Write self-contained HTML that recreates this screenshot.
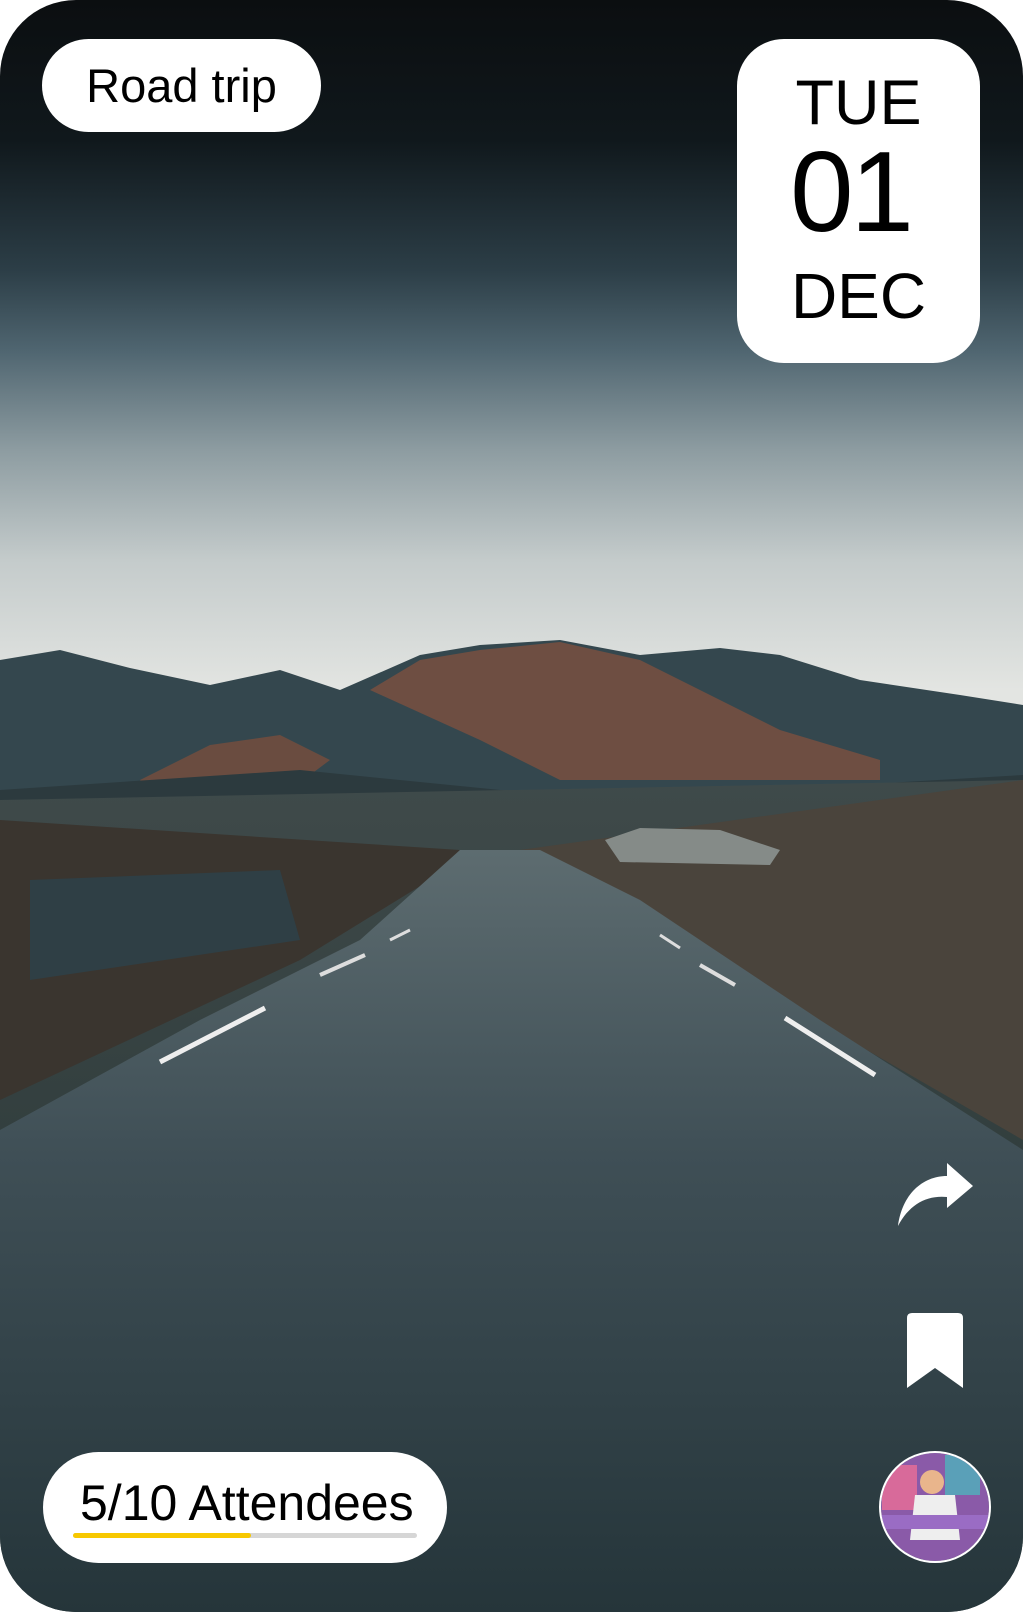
<!DOCTYPE html>
<html><head><style>
html,body{margin:0;padding:0;background:#fff;}
body{width:1023px;height:1614px;position:relative;overflow:hidden;font-family:"Liberation Sans",sans-serif;}
.card{position:absolute;left:0;top:0;width:1023px;height:1612px;border-radius:76px;overflow:hidden;
background:linear-gradient(180deg,#0b0e10 0px,#10181c 140px,#2c3e47 270px,#4f6570 350px,#8d9ca1 450px,#c4cbcb 560px,#e3e5e2 690px);}
.pill{position:absolute;background:#fff;color:#000;}
</style></head><body>
<div class="card">
<svg width="1023" height="1612" style="position:absolute;left:0;top:0">
<defs>
<linearGradient id="g" x1="0" y1="0" x2="0" y2="1"><stop offset="0" stop-color="#3f4a4a"/><stop offset="1" stop-color="#22302f"/></linearGradient>
<linearGradient id="rd" x1="0" y1="0" x2="0" y2="1"><stop offset="0" stop-color="#5d6c70"/><stop offset="0.4" stop-color="#3f4f56"/><stop offset="1" stop-color="#25353a"/></linearGradient>
</defs>
<path d="M0 660 L60 650 L130 668 L210 685 L280 670 L340 690 L420 655 L480 645 L560 640 L640 655 L720 648 L780 655 L860 680 L960 695 L1023 705 L1023 800 L0 820Z" fill="#34474e"/>
<path d="M370 690 L420 660 L480 650 L560 642 L640 660 L700 690 L780 730 L880 760 L880 780 L560 780 L480 740Z" fill="#6e4e42"/>
<path d="M140 780 L210 745 L280 735 L330 760 L290 790 L150 790Z" fill="#6a4c40"/>
<path d="M0 790 L300 770 L600 800 L1023 775 L1023 830 L0 840Z" fill="#2c3a3e"/>
<path d="M0 800 L1023 780 L1023 1612 L0 1612Z" fill="url(#g)"/>
<path d="M0 820 L460 850 L430 880 L300 960 L0 1100Z" fill="#3a352f"/>
<path d="M520 850 L1023 780 L1023 1140 L780 1000 L620 900Z" fill="#4a443c"/>
<path d="M30 880 L280 870 L300 940 L30 980Z" fill="#2f3f45"/>
<path d="M605 840 L640 828 L720 830 L780 850 L770 865 L620 862Z" fill="#858b88"/>
<path d="M460 850 L540 850 L640 900 L820 1020 L1023 1150 L1023 1612 L0 1612 L0 1130 L200 1020 L360 940Z" fill="url(#rd)"/>
<path d="M160 1062 L265 1008" stroke="#eee" stroke-width="5"/>
<path d="M320 975 L365 955" stroke="#ddd" stroke-width="4"/>
<path d="M390 940 L410 930" stroke="#ddd" stroke-width="3"/>
<path d="M785 1018 L875 1075" stroke="#eee" stroke-width="5"/>
<path d="M700 965 L735 985" stroke="#ddd" stroke-width="4"/>
<path d="M660 935 L680 948" stroke="#ddd" stroke-width="3"/>
<path d="M898 1226 C902 1195 922 1176 947 1176 L947 1163 L973 1186 L947 1208 L947 1197 C926 1195 909 1205 898 1226Z" fill="#fff"/>
<path d="M912 1313 L958 1313 Q963 1313 963 1318 L963 1388 L935 1368 L907 1388 L907 1318 Q907 1313 912 1313Z" fill="#fff"/>
<clipPath id="av"><circle cx="935" cy="1507" r="54"/></clipPath>
<g clip-path="url(#av)">
<rect x="880" y="1450" width="110" height="115" fill="#8a5aa8"/>
<rect x="882" y="1465" width="35" height="45" fill="#d86a9a"/>
<rect x="945" y="1455" width="35" height="40" fill="#5aa0b8"/>
<circle cx="932" cy="1482" r="12" fill="#e9b58c"/>
<path d="M915 1495 L955 1495 L960 1540 L910 1540Z" fill="#eee"/>
<rect x="880" y="1515" width="110" height="14" fill="#9a6cc4"/>
</g>
<circle cx="935" cy="1507" r="55" fill="none" stroke="#fff" stroke-width="2"/>
</svg>
<div class="pill" style="left:42px;top:39px;width:279px;height:93px;border-radius:47px;font-size:47px;line-height:93px;text-align:center;">Road trip</div>
<div class="pill" style="left:737px;top:39px;width:243px;height:324px;border-radius:47px;text-align:center;">
<div style="font-size:63px;position:absolute;top:28px;width:100%;">TUE</div>
<div style="font-size:114px;position:absolute;top:88px;width:100%;letter-spacing:-3px;margin-left:-8px">01</div>
<div style="font-size:64px;position:absolute;top:220px;width:100%;">DEC</div>
</div>
<div class="pill" style="left:43px;top:1452px;width:404px;height:111px;border-radius:56px;">
<div style="position:absolute;left:37px;top:22px;font-size:50px;">5/10 Attendees</div>
<div style="position:absolute;left:30px;top:81px;width:344px;height:5px;border-radius:3px;background:#d6d6d6"></div>
<div style="position:absolute;left:30px;top:81px;width:178px;height:5px;border-radius:3px;background:#f7c800"></div>
</div>
</div>
</body></html>
